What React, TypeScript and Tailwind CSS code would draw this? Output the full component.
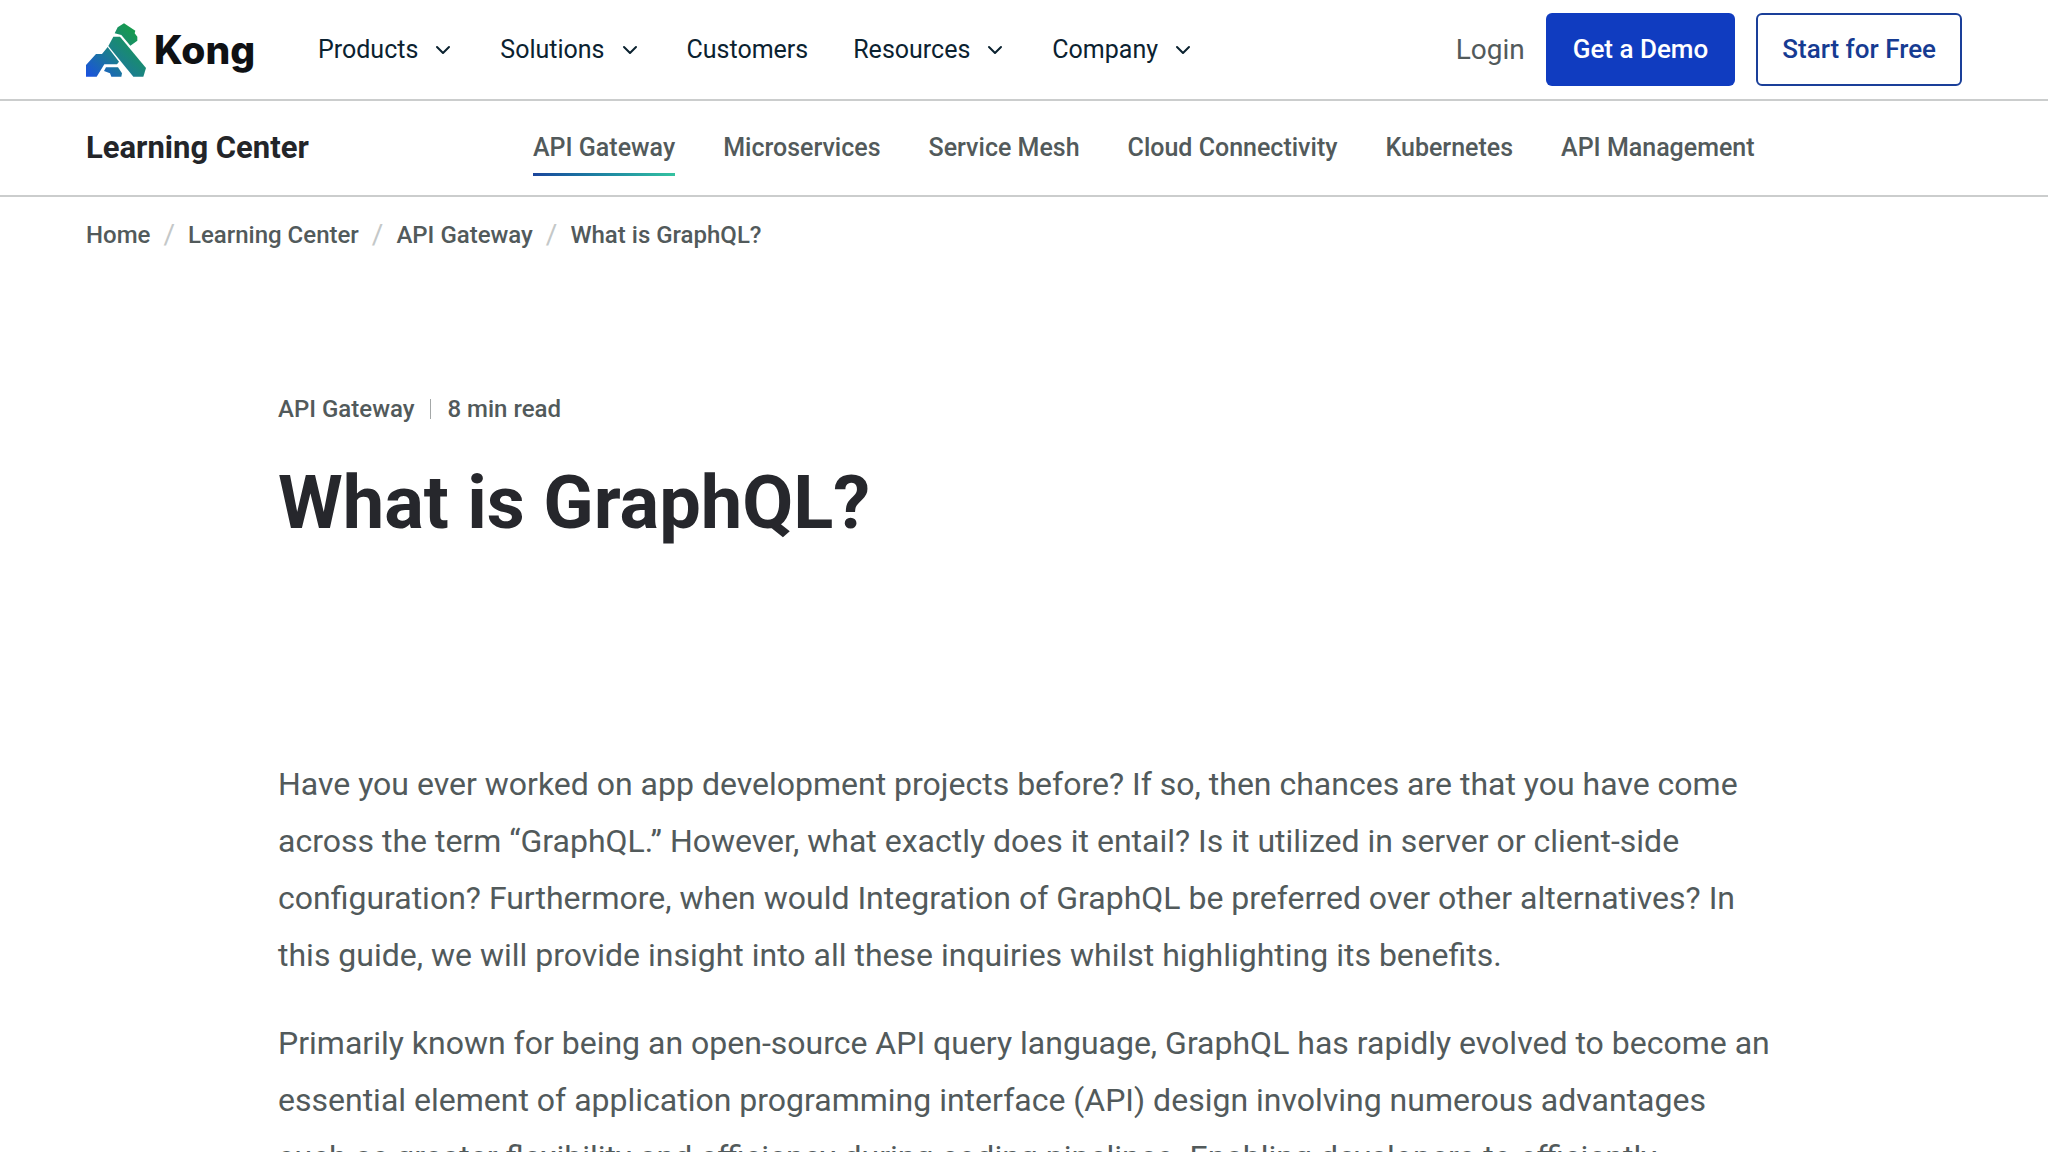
import { ChevronDown } from "lucide-react";
import { Fragment } from "react";
import { twMerge } from "tailwind-merge";

const navItems = [
  { label: "Products", hasMenu: true },
  { label: "Solutions", hasMenu: true },
  { label: "Customers", hasMenu: false },
  { label: "Resources", hasMenu: true },
  { label: "Company", hasMenu: true },
];

const topics = [
  "API Gateway",
  "Microservices",
  "Service Mesh",
  "Cloud Connectivity",
  "Kubernetes",
  "API Management",
];

const breadcrumbs = [
  "Home",
  "Learning Center",
  "API Gateway",
  "What is GraphQL?",
];

const paragraphs = [
  "Have you ever worked on app development projects before? If so, then chances are that you have come across the term “GraphQL.” However, what exactly does it entail? Is it utilized in server or client-side configuration? Furthermore, when would Integration of GraphQL be preferred over other alternatives? In this guide, we will provide insight into all these inquiries whilst highlighting its benefits.",
  "Primarily known for being an open-source API query language, GraphQL has rapidly evolved to become an essential element of application programming interface (API) design involving numerous advantages such as greater flexibility and efficiency during coding pipelines. Enabling developers to efficiently",
];

function Logo() {
  return (
    <a href="#" className="flex items-center gap-2 w-[232px] shrink-0">
      <svg width={60} height={54} viewBox="48 38 180 160" aria-hidden="true">
        <defs>
          <linearGradient
            id="kong"
            gradientUnits="userSpaceOnUse"
            x1={50}
            y1={198}
            x2={190}
            y2={50}
          >
            <stop offset="0" stopColor="#1a50e0" />
            <stop offset="0.5" stopColor="#1b7f8c" />
            <stop offset="1" stopColor="#169c4a" />
          </linearGradient>
        </defs>
        <g fill="url(#kong)">
          <path d="M143 50 L162 38 L196 60 L194 68 L202 78 L202 90 L181 105 L154 73 L134 68 Z" />
          <path d="M130 78 L150 78 L228 172 L220 198 L190 198 L115 106 Z" />
          <path d="M48 198 L48 163 L78 130 L96 130 L113 109 L147 153 L141 161 L103 161 L80 198 Z" />
          <path d="M108 170 L144 170 L156 188 L154 198 L124 198 L120 188 L102 181 Z" />
        </g>
      </svg>
      <span className="font-['Inter',sans-serif] font-extrabold text-[39px] leading-none text-[#0f1114]">
        Kong
      </span>
    </a>
  );
}

function Header() {
  return (
    <header className="flex items-center h-[101px] px-[86px] border-b-2 border-[#cbcdcd]">
      <Logo />
      <nav className="flex items-center gap-[45px] text-[25px] text-[#0b2230]">
        {navItems.map((item) =>
          item.hasMenu ? (
            <button key={item.label} className="flex items-center gap-[13px]">
              {item.label}
              <ChevronDown size={24} strokeWidth={2} />
            </button>
          ) : (
            <a key={item.label} href="#">
              {item.label}
            </a>
          )
        )}
      </nav>
      <div className="flex items-center gap-[21px] ml-auto">
        <a href="#" className="text-[28px] text-[#525a5b]">
          Login
        </a>
        <button className="h-[73px] px-[27px] rounded-md bg-[#103cc0] text-white text-[26px] font-medium">
          Get a Demo
        </button>
        <button className="h-[73px] px-6 rounded-md border-2 border-[#1a3f99] text-[#163b92] text-[26px] font-medium">
          Start for Free
        </button>
      </div>
    </header>
  );
}

function TopicBar() {
  return (
    <div className="flex items-center h-[96px] px-[86px] border-b-2 border-[#cbcdcd]">
      <div className="w-[447px] shrink-0 text-[31px] leading-[48px] font-bold text-[#232529]">
        Learning Center
      </div>
      <nav className="flex gap-[48px] text-[25px] leading-[30px] font-medium text-[#525a5b]">
        {topics.map((topic, index) => (
          <a
            key={topic}
            href="#"
            className={twMerge(
              "relative whitespace-nowrap",
              index === 0 &&
                "after:absolute after:inset-x-0 after:-bottom-[13px] after:h-[3px] after:bg-linear-to-r after:from-[#1c459c] after:to-[#35c3a0]"
            )}
          >
            {topic}
          </a>
        ))}
      </nav>
    </div>
  );
}

function Breadcrumbs() {
  return (
    <nav
      aria-label="Breadcrumb"
      className="flex items-center gap-[13px] h-[76px] px-[86px] text-[24px] font-medium text-[#525a5b]"
    >
      {breadcrumbs.map((crumb, index) => (
        <Fragment key={crumb}>
          {index > 0 && (
            <span className="text-[28px] font-normal text-[#c4c8c8]">/</span>
          )}
          <a href="#">{crumb}</a>
        </Fragment>
      ))}
    </nav>
  );
}

export default function App() {
  return (
    <div className="h-screen overflow-hidden bg-white font-['Roboto',sans-serif]">
      <Header />
      <TopicBar />
      <Breadcrumbs />
      <main className="max-w-[1492px] mx-auto pt-[121px]">
        <div className="flex items-center gap-4 text-[24px] leading-[30px] font-medium text-[#525a5b]">
          <span>API Gateway</span>
          <span className="w-px h-5 bg-[#a4a8a8]"></span>
          <span>8 min read</span>
        </div>
        <h1 className="mt-[35px] text-[74px] leading-[88px] font-bold text-[#26272c]">
          What is GraphQL?
        </h1>
        <div className="mt-[209px] flex flex-col gap-[31px] text-[32px] leading-[57px] text-[#525a5b]">
          {paragraphs.map((text) => (
            <p key={text}>{text}</p>
          ))}
        </div>
      </main>
    </div>
  );
}
